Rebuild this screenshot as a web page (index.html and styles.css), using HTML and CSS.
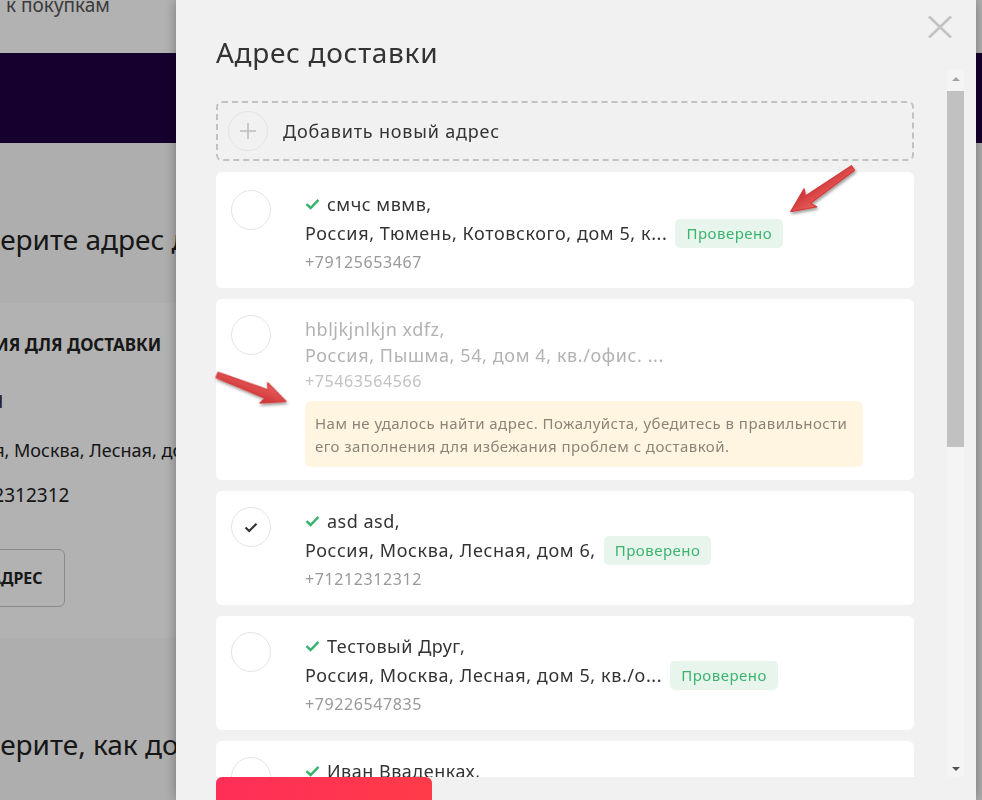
FILE: index.html
```html
<!DOCTYPE html>
<html lang="ru">
<head>
<meta charset="utf-8">
<title>Адрес доставки</title>
<link rel="stylesheet" href="styles.css">
</head>
<body>
<div class="page">
  <header class="top-bar"><span class="back-link">Вернуться к покупкам</span></header>
  <div class="promo-band"></div>
  <main class="checkout">
    <h2 class="section-title">Выберите адрес доставки</h2>
    <section class="summary-card">
      <div class="summary-head">ОПЦИЯ ДЛЯ ДОСТАВКИ</div>
      <div class="summary-name">ASD ИВАН</div>
      <div class="summary-address">Россия, Москва, Лесная, дом 6</div>
      <div class="summary-phone">+71212312312</div>
      <div class="summary-btn">ИЗМЕНИТЬ АДРЕС</div>
    </section>
    <h2 class="section-title section-title-2">Выберите, как доставить</h2>
  </main>
</div>

<div class="backdrop"></div>

<div class="modal">
  <h1 class="modal-title">Адрес доставки</h1>
  <button class="modal-close" aria-label="Закрыть">
    <svg width="26" height="24" viewBox="0 0 26 24"><path d="M2 1.5 L24 22.5 M24 1.5 L2 22.5" stroke="#c3c3c3" stroke-width="2.6" fill="none"/></svg>
  </button>

  <div class="modal-body">
    <div class="addr-list">
      <div class="addr-add">
        <span class="plus-circle"><svg width="18" height="18" viewBox="0 0 18 18"><path d="M9 1 V17 M1 9 H17" stroke="#bdbdbd" stroke-width="1.6"/></svg></span>
        <span class="addr-add-text">Добавить новый адрес</span>
      </div>

      <div class="addr-card addr-card-first">
        <span class="radio"></span>
        <div class="addr-lines">
          <div class="addr-name"><svg class="ok" width="15" height="12" viewBox="0 0 15 12"><path d="M1.5 6.2 L5.6 10 L13.5 1.8" stroke="#35b56c" stroke-width="2.4" fill="none"/></svg><span>смчс мвмв,</span></div>
          <div class="addr-street"><span>Россия, Тюмень, Котовского, дом 5, к...</span><span class="badge">Проверено</span></div>
          <div class="addr-phone">+79125653467</div>
        </div>
      </div>

      <div class="addr-card is-unverified">
        <span class="radio"></span>
        <div class="addr-lines">
          <div class="addr-name"><span>hbljkjnlkjn xdfz,</span></div>
          <div class="addr-street addr-street-plain"><span>Россия, Пышма, 54, дом 4, кв./офис. ...</span></div>
          <div class="addr-phone">+75463564566</div>
          <div class="addr-warning">Нам не удалось найти адрес. Пожалуйста, убедитесь в правильности его заполнения для избежания проблем с доставкой.</div>
        </div>
      </div>

      <div class="addr-card">
        <span class="radio is-checked"><svg width="14" height="11" viewBox="0 0 14 11"><path d="M1.5 5.5 L5.2 9 L12.5 1.8" stroke="#333" stroke-width="2.2" fill="none"/></svg></span>
        <div class="addr-lines">
          <div class="addr-name"><svg class="ok" width="15" height="12" viewBox="0 0 15 12"><path d="M1.5 6.2 L5.6 10 L13.5 1.8" stroke="#35b56c" stroke-width="2.4" fill="none"/></svg><span>asd asd,</span></div>
          <div class="addr-street"><span>Россия, Москва, Лесная, дом 6,</span><span class="badge">Проверено</span></div>
          <div class="addr-phone">+71212312312</div>
        </div>
      </div>

      <div class="addr-card">
        <span class="radio"></span>
        <div class="addr-lines">
          <div class="addr-name"><svg class="ok" width="15" height="12" viewBox="0 0 15 12"><path d="M1.5 6.2 L5.6 10 L13.5 1.8" stroke="#35b56c" stroke-width="2.4" fill="none"/></svg><span>Тестовый Друг,</span></div>
          <div class="addr-street"><span>Россия, Москва, Лесная, дом 5, кв./о...</span><span class="badge">Проверено</span></div>
          <div class="addr-phone">+79226547835</div>
        </div>
      </div>

      <div class="addr-card">
        <span class="radio"></span>
        <div class="addr-lines">
          <div class="addr-name"><svg class="ok" width="15" height="12" viewBox="0 0 15 12"><path d="M1.5 6.2 L5.6 10 L13.5 1.8" stroke="#35b56c" stroke-width="2.4" fill="none"/></svg><span>Иван Вваденках,</span></div>
          <div class="addr-street"><span>Россия, Москва, Лесная, дом 5</span><span class="badge">Проверено</span></div>
          <div class="addr-phone">+79001234567</div>
        </div>
      </div>
    </div>

    <div class="scrollbar">
      <div class="sb-btn"><span class="tri-up"></span></div>
      <div class="sb-track"><div class="sb-thumb"></div></div>
      <div class="sb-btn"><span class="tri-down"></span></div>
    </div>
  </div>

  <div class="modal-footer">
    <button class="submit-btn">Доставить сюда</button>
  </div>
</div>

<svg class="annotations" width="982" height="800" viewBox="0 0 982 800">
  <defs>
    <linearGradient id="arrowFill" x1="0" y1="0" x2="0" y2="1">
      <stop offset="0" stop-color="#ec6262"/>
      <stop offset="1" stop-color="#c92f2f"/>
    </linearGradient>
    <filter id="arrowShadow" x="-20%" y="-40%" width="140%" height="180%">
      <feDropShadow dx="1" dy="2" stdDeviation="1.4" flood-color="#000" flood-opacity="0.4"/>
    </filter>
  </defs>
  <g filter="url(#arrowShadow)">
    <polygon transform="translate(853,168) rotate(145)" points="0,-2.8 55,-4.4 52,-11 76,0 52,11 55,4.4 0,2.8" fill="url(#arrowFill)" stroke="#d23c3c" stroke-width="1.2" stroke-linejoin="round"/>
    <polygon transform="translate(217,375) rotate(21)" points="0,-2.8 53,-4.4 50,-11 74,0 50,11 53,4.4 0,2.8" fill="url(#arrowFill)" stroke="#d23c3c" stroke-width="1.2" stroke-linejoin="round"/>
  </g>
</svg>
</body>
</html>
```
FILE: styles.css
```css
* { box-sizing: border-box; }

html, body {
  margin: 0;
  height: 100%;
}

body {
  font-family: "Noto Sans", "Liberation Sans", sans-serif;
  background: #fafafa;
  color: #222;
  overflow: hidden;
}

/* ---------- background page ---------- */
.page {
  width: 982px;
}

.top-bar {
  height: 53px;
  background: #fff;
  padding-left: 6px;
  overflow: hidden;
}

.back-link {
  display: block;
  margin-top: -7px;
  margin-left: -100px;
  font-size: 19px;
  line-height: 24px;
  color: #555;
  white-space: nowrap;
}

.promo-band {
  height: 90px;
  background: #1f0042;
}

.checkout {
  margin-left: -56px;
}

.section-title {
  margin: 0;
  padding-top: 78px;
  font-size: 28px;
  font-weight: 400;
  line-height: 36px;
  color: #222;
  white-space: nowrap;
}

.section-title-2 {
  padding-top: 88px;
}

.summary-card {
  margin-top: 46px;
  margin-left: -40px;
  padding: 30px 0 31px 40px;
  background: #fff;
  display: flex;
  flex-direction: column;
  align-items: flex-start;
  width: 700px;
  white-space: nowrap;
}

.summary-head {
  margin-left: 12px;
  font-size: 17px;
  font-weight: 700;
  line-height: 24px;
  color: #222;
}

.summary-name {
  margin-top: 32px;
  margin-left: -30px;
  font-size: 18px;
  line-height: 24px;
}

.summary-address {
  margin-top: 25px;
  font-size: 18px;
  line-height: 24px;
}

.summary-phone {
  margin-top: 21px;
  margin-left: -5px;
  font-size: 19px;
  line-height: 24px;
}

.summary-btn {
  margin-top: 42px;
  margin-left: -70px;
  height: 58px;
  padding: 0 21px 0 20px;
  border: 1px solid #c8c8c8;
  border-radius: 6px;
  font-size: 16px;
  font-weight: 700;
  line-height: 56px;
  background: #fff;
}

.backdrop {
  position: fixed;
  inset: 0;
  background: rgba(0, 0, 0, 0.3);
}

/* ---------- modal ---------- */
.modal {
  position: fixed;
  top: 0;
  left: 176px;
  width: 800px;
  height: 800px;
  background: #f1f1f1;
  box-shadow: 0 0 12px rgba(0, 0, 0, 0.35);
  display: flex;
  flex-direction: column;
  overflow: hidden;
  color: #333;
}

.modal-title {
  margin: 0;
  height: 70px;
  padding: 34px 40px 0;
  font-size: 28px;
  font-weight: 400;
  line-height: 36px;
  letter-spacing: 0.7px;
  color: #333;
}

.modal-close {
  position: absolute;
  top: 15px;
  left: 751px;
  padding: 0;
  border: 0;
  background: none;
  width: 26px;
  height: 24px;
}

.modal-close svg { display: block; }

.modal-body {
  display: flex;
  height: 707px;
  padding-left: 40px;
}

.addr-list {
  width: 698px;
  overflow: hidden;
  padding-top: 31px;
}

.addr-add {
  height: 60px;
  border: 2px dashed #c2c2c2;
  border-radius: 6px;
  display: flex;
  align-items: center;
  padding-left: 10px;
  gap: 15px;
}

.plus-circle {
  width: 40px;
  height: 40px;
  border: 1px solid #e4e4e4;
  border-radius: 50%;
  display: flex;
  align-items: center;
  justify-content: center;
}

.plus-circle svg { display: block; }

.addr-add-text {
  font-size: 18px;
  letter-spacing: 0.8px;
  color: #333;
}

.addr-card {
  margin-top: 11px;
  background: #fff;
  border-radius: 6px;
  display: flex;
  align-items: flex-start;
  padding: 17px 15px 13px;
}

.addr-card-first {
  padding-top: 19px;
}

.radio {
  flex: none;
  width: 40px;
  height: 40px;
  margin-top: -1px;
  border: 1px solid #e4e4e4;
  border-radius: 50%;
  display: flex;
  align-items: center;
  justify-content: center;
}

.radio svg { display: block; }

.addr-lines {
  margin-left: 34px;
  font-size: 18px;
  line-height: 26px;
  letter-spacing: 0.6px;
  color: #333;
}

.addr-name {
  display: flex;
  align-items: center;
  gap: 7px;
  height: 26px;
  letter-spacing: 0.5px;
}

.ok { display: block; flex: none; }

.addr-street {
  display: flex;
  align-items: center;
  height: 32px;
  white-space: nowrap;
}

.addr-street-plain {
  height: 26px;
}

.badge {
  margin-left: 8px;
  height: 29px;
  padding: 0 11px;
  border-radius: 5px;
  background: #e7f5ed;
  color: #3db370;
  font-size: 15px;
  line-height: 29px;
  letter-spacing: 0.5px;
}

.addr-phone {
  font-size: 16px;
  color: #999;
  height: 26px;
}

.is-unverified .addr-lines { color: #b2b2b2; }
.is-unverified .addr-phone { color: #c2c2c2; }

.addr-warning {
  margin-top: 7px;
  width: 558px;
  padding: 11px 10px 9px;
  border-radius: 6px;
  background: #fff5e1;
  color: #8b8577;
  font-size: 15px;
  line-height: 23px;
  letter-spacing: 0.45px;
}

/* ---------- scrollbar ---------- */
.scrollbar {
  margin-left: 33px;
  width: 17px;
  display: flex;
  flex-direction: column;
  background: #f4f4f4;
}

.sb-btn {
  height: 17px;
  display: flex;
  align-items: center;
  justify-content: center;
}

.tri-up {
  width: 0;
  height: 0;
  border-left: 4px solid transparent;
  border-right: 4px solid transparent;
  border-bottom: 4px solid #a3a3a3;
}

.tri-down {
  width: 0;
  height: 0;
  border-left: 4px solid transparent;
  border-right: 4px solid transparent;
  border-top: 4px solid #505050;
}

.sb-track {
  flex: 1;
  padding-top: 4px;
}

.sb-thumb {
  height: 356px;
  background: #c1c1c1;
}

/* ---------- footer ---------- */
.modal-footer {
  padding-left: 40px;
}

.submit-btn {
  width: 216px;
  height: 80px;
  border: 0;
  border-radius: 6px;
  background: linear-gradient(90deg, #ff2e58, #ff3b48);
  color: #fff;
  font-family: inherit;
  font-size: 16px;
  font-weight: 600;
  line-height: 24px;
  padding: 34px 0 0;
}

.annotations {
  position: fixed;
  top: 0;
  left: 0;
  pointer-events: none;
}
```
